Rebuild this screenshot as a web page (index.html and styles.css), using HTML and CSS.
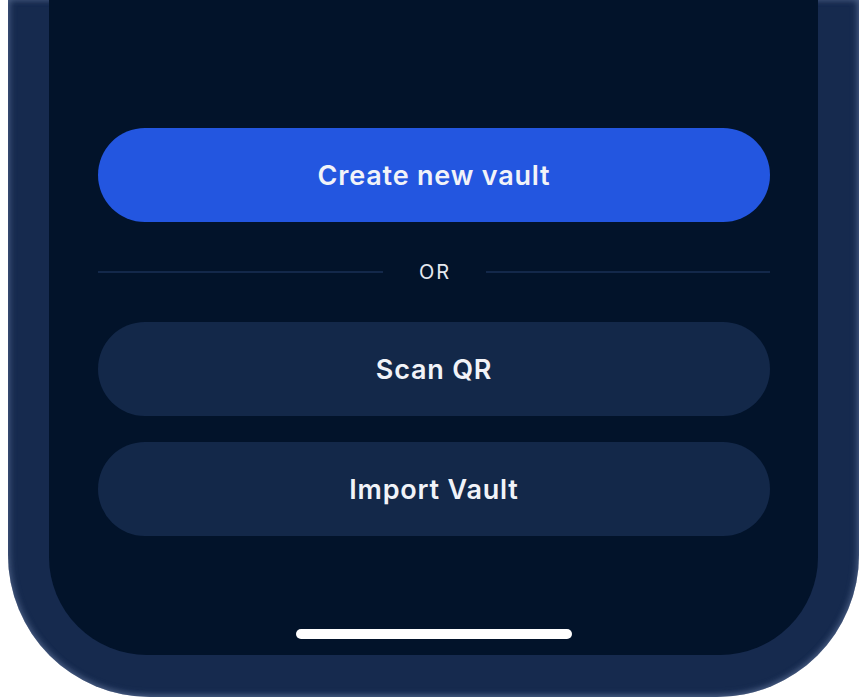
FILE: index.html
```html
<!DOCTYPE html>
<html>
<head>
<meta charset="utf-8">
<link rel="stylesheet" href="styles.css">
</head>
<body>
<div class="phone">
  <div class="screen">
    <div class="actions">
      <button class="btn btn-primary">Create new vault</button>
      <div class="divider"><span class="line"></span><span class="or">OR</span><span class="line"></span></div>
      <button class="btn btn-secondary">Scan QR</button>
      <button class="btn btn-secondary btn-import">Import Vault</button>
    </div>
    <div class="home-bar"></div>
  </div>
</div>
</body>
</html>
```
FILE: styles.css
```css
html, body {
  margin: 0;
  padding: 0;
  background: #ffffff;
  overflow: hidden;
}
body {
  width: 867px;
  height: 697px;
  font-family: Inter, "Noto Sans", sans-serif;
}
.phone {
  box-sizing: border-box;
  margin-left: 8px;
  width: 851px;
  height: 697px;
  background: #162a4e;
  border-radius: 0 0 142px 142px;
  padding: 0 41px 42px 41px;
  box-shadow: inset 3px 0 6px rgba(120, 140, 180, 0.3), inset -3px 0 6px rgba(120, 140, 180, 0.3), inset 0 -3px 6px rgba(120, 140, 180, 0.25);
  display: flex;
}
.screen {
  flex: 1;
  background: #02132a;
  border-radius: 0 0 98px 98px;
  display: flex;
  flex-direction: column;
  padding: 128px 48px 0 49px;
}
.actions {
  display: flex;
  flex-direction: column;
}
.btn {
  height: 94px;
  border: none;
  border-radius: 47px;
  font-family: Inter, "Noto Sans", sans-serif;
  font-weight: 600;
  font-size: 27px;
  letter-spacing: 0.8px;
  color: #f1f3f8;
  padding: 0;
}
.btn-primary {
  background: #2356e0;
}
.btn-secondary {
  background: #132849;
}
.btn-import {
  margin-top: 26px;
}
.divider {
  display: flex;
  align-items: center;
  height: 100px;
}
.line {
  flex: 1;
  height: 2px;
  background: #13284a;
}
.or {
  width: 103px;
  text-align: center;
  font-size: 20px;
  letter-spacing: 2px;
  padding-left: 2px;
  box-sizing: border-box;
  color: #e6e9f0;
  font-weight: 400;
}
.home-bar {
  align-self: center;
  margin-top: 93px;
  width: 276px;
  height: 10px;
  border-radius: 5px;
  background: #ffffff;
}
```
